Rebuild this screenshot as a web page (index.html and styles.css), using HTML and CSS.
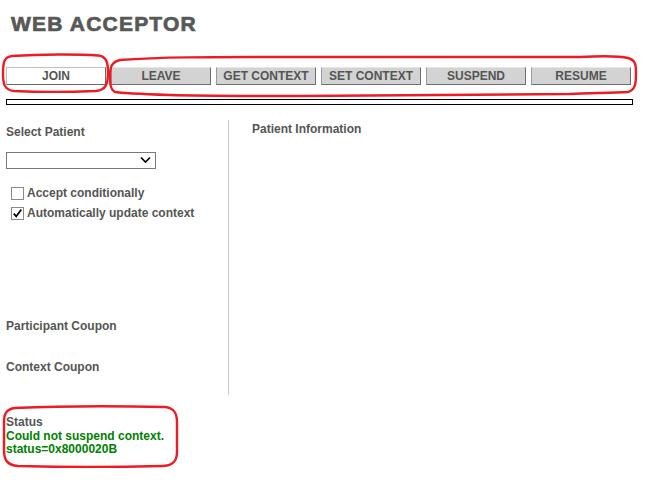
FILE: index.html
```html
<!DOCTYPE html>
<html>
<head>
<meta charset="utf-8">
<link rel="stylesheet" href="styles.css">
</head>
<body>
<div class="page">
  <h1 class="title">WEB ACCEPTOR</h1>
  <div class="toolbar">
    <button class="btn btn-join">JOIN</button>
    <button class="btn">LEAVE</button>
    <button class="btn">GET CONTEXT</button>
    <button class="btn">SET CONTEXT</button>
    <button class="btn">SUSPEND</button>
    <button class="btn">RESUME</button>
  </div>
  <div class="progress"></div>
  <div class="main">
    <div class="left">
      <div class="label first">Select Patient</div>
      <div class="select-wrap">
        <select class="select"><option></option></select>
        <svg class="chev" width="12" height="8" viewBox="0 0 12 8"><path d="M1 1.5 L5.5 6 L10 1.5" fill="none" stroke="#000" stroke-width="1.6"/></svg>
      </div>
      <div class="checks">
        <label class="check-row"><span class="box"></span><span>Accept conditionally</span></label>
        <label class="check-row"><span class="box"><svg width="11" height="11" viewBox="0 0 11 11"><path d="M1.8 5.6 L4.2 8.4 L9.3 1.6" fill="none" stroke="#000" stroke-width="1.7"/></svg></span><span>Automatically update context</span></label>
      </div>
      <div class="label participant">Participant Coupon</div>
      <div class="label context">Context Coupon</div>
    </div>
    <div class="right">
      <div class="label">Patient Information</div>
    </div>
  </div>
  <div class="status">
    <div class="label">Status</div>
    <div class="status-msg">Could not suspend context.<br>status=0x8000020B</div>
  </div>
</div>
<svg class="marks" width="649" height="489" viewBox="0 0 649 489">
  <path d="M12,56 C40,54 80,54 98,55.5 C106,56 108,62 108,72 C108,84 106,90 96,91 C70,92 35,92 14,91 C5,90 3,85 3,74 C3,62 4,57 12,56 Z"/>
  <path d="M120,60 C160,57 200,57 300,57 L580,57 C600,56 620,56 628,58 C635,60 636,64 636,72 C636,82 636,90 628,92 C610,93 590,93 570,94 L300,96 C240,96 200,96 170,95 C140,94 120,93 115,92 C111,90 110,86 110,76 C110,68 111,62 120,60 Z"/>
  <path d="M15,408 C60,406 120,406 165,407 C174,408 177,413 177,422 L177,452 C177,462 172,466 162,466 C120,467 60,467 18,466 C7,465 4,460 4,450 L4,422 C4,413 7,409 15,408 Z"/>
</svg>
</body>
</html>
```

FILE: styles.css
```css
html, body {
  margin: 0;
  padding: 0;
  background: #fff;
}
body {
  font-family: "Liberation Sans", Arial, sans-serif;
  font-size: 12px;
  font-weight: bold;
  color: #555;
}
.page {
  padding-left: 6px;
}
.title {
  margin: 12px 0 0 5px;
  font-size: 21px;
  line-height: 24px;
  letter-spacing: 1.2px;
  font-weight: bold;
  color: #585858;
  -webkit-text-stroke: 0.7px #585858;
}
.toolbar {
  display: flex;
  gap: 5px;
  margin-top: 31px;
}
.btn {
  width: 100px;
  height: 18px;
  padding: 0;
  margin: 0;
  box-sizing: border-box;
  font-family: "Liberation Sans", Arial, sans-serif;
  font-size: 12px;
  font-weight: bold;
  color: #555;
  background: #d3d3d3;
  border: 1px solid;
  border-color: #e6e6e6 #6e6e6e #6e6e6e #9a9a9a;
  line-height: 16px;
}
.btn-join {
  background: #fff;
  border-color: #c0c0c0 #6a6a6a #6a6a6a #c0c0c0;
}
.progress {
  margin-top: 14px;
  width: 627px;
  height: 6px;
  box-sizing: border-box;
  border: 1px solid #000;
  background: #fff;
}
.main {
  display: flex;
  margin-top: 15px;
  height: 275px;
}
.left {
  width: 222px;
  border-right: 1px solid #c8c8c8;
  display: flex;
  flex-direction: column;
}
.right {
  padding-left: 23px;
  padding-top: 2px;
}
.label {
  line-height: 14px;
}
.first {
  margin-top: 5px;
}
.select-wrap {
  position: relative;
  margin-top: 13px;
  width: 150px;
  height: 17px;
}
.select {
  appearance: none;
  -webkit-appearance: none;
  width: 150px;
  height: 17px;
  margin: 0;
  border: 1px solid #7a7a7a;
  border-radius: 0;
  background: #fff;
  box-sizing: border-box;
}
.chev {
  position: absolute;
  left: 134px;
  top: 4px;
}
.checks {
  margin-top: 14px;
  display: flex;
  flex-direction: column;
}
.check-row {
  display: flex;
  align-items: center;
  height: 20px;
  gap: 3px;
  padding-left: 5px;
}
.box {
  width: 13px;
  height: 13px;
  box-sizing: border-box;
  border: 1px solid #8a8a8a;
  background: #fff;
  display: flex;
  align-items: center;
  justify-content: center;
}
.box svg {
  display: block;
}
.participant {
  margin-top: 96px;
}
.context {
  margin-top: 27px;
}
.status {
  margin-top: 21px;
  line-height: 13.5px;
}
.status .label {
  line-height: 13.5px;
}
.status-msg {
  color: #008000;
}
.marks {
  position: absolute;
  left: 0;
  top: 0;
  pointer-events: none;
  fill: none;
  stroke: #ed1c24;
  stroke-width: 2.4;
}
```
